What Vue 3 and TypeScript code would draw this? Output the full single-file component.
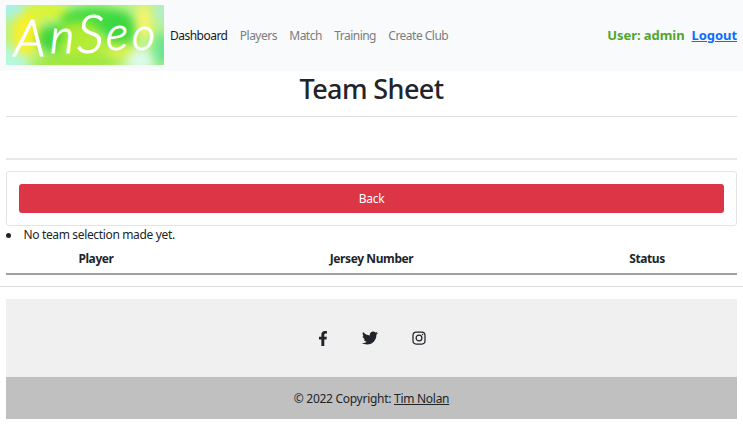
<script setup lang="ts">
interface NavItem {
  label: string
  active?: boolean
}

const navItems: NavItem[] = [
  { label: 'Dashboard', active: true },
  { label: 'Players' },
  { label: 'Match' },
  { label: 'Training' },
  { label: 'Create Club' },
]
const columns: string[] = ['Player', 'Jersey Number', 'Status']
</script>

<template>
  <div class="page">
    <nav class="navbar">
      <svg class="logo" width="158" height="60" viewBox="0 0 158 60" role="img" aria-label="AnSeo">
        <defs>
          <filter id="soft" x="-30%" y="-30%" width="160%" height="160%" color-interpolation-filters="sRGB">
            <feGaussianBlur stdDeviation="5" />
          </filter>
          <clipPath id="frame"><rect width="158" height="60" /></clipPath>
        </defs>
        <g clip-path="url(#frame)">
          <rect width="158" height="60" fill="#b8f389" />
          <g filter="url(#soft)">
            <rect x="-20" y="-20" width="198" height="100" fill="#b8f389" />
            <ellipse cx="1" cy="0" rx="18" ry="14" fill="#a9f2e4" />
            <ellipse cx="2" cy="57" rx="20" ry="15" fill="#b5f8dc" />
            <ellipse cx="20" cy="29" rx="14" ry="22" fill="#f8f02c" />
            <ellipse cx="40" cy="6" rx="22" ry="8" fill="#dcf433" />
            <ellipse cx="50" cy="34" rx="19" ry="14" fill="#43d63e" />
            <ellipse cx="88" cy="15" rx="34" ry="13" fill="#43dc42" />
            <ellipse cx="114" cy="25" rx="15" ry="19" fill="#3bd840" />
            <ellipse cx="73" cy="25" rx="19" ry="8" fill="#b0ea32" />
            <ellipse cx="80" cy="41" rx="29" ry="10" fill="#b4ed35" />
            <ellipse cx="70" cy="58" rx="43" ry="9" fill="#a0e83c" />
            <ellipse cx="138" cy="16" rx="9" ry="18" fill="#f3f46b" />
            <ellipse cx="117" cy="46" rx="16" ry="8" fill="#d8f14b" />
            <ellipse cx="134" cy="56" rx="13" ry="12" fill="#dcfaea" />
            <ellipse cx="157" cy="44" rx="10" ry="17" fill="#6ce592" />
            <ellipse cx="159" cy="6" rx="12" ry="13" fill="#afefc7" />
          </g>
        </g>
        <text class="logo-text" font-size="52" x="8" y="51">A</text>
        <text class="logo-text" font-size="47" x="44" y="48">n</text>
        <text class="logo-text" font-size="54" x="71" y="48">S</text>
        <text class="logo-text" font-size="47" x="100" y="45">e</text>
        <text class="logo-text" font-size="45" x="126" y="45">o</text>
      </svg>
      <ul class="nav-links">
        <li v-for="item in navItems" :key="item.label" :class="{ active: item.active }">{{ item.label }}</li>
      </ul>
      <div class="account"><span>User: admin</span><a class="logout">Logout</a></div>
    </nav>

    <main class="content">
      <h1>Team Sheet</h1>
      <hr class="rule first" />
      <hr class="rule second" />
      <div class="card"><button class="back" type="button">Back</button></div>
      <div class="notice"><span class="bullet"></span><span>No team selection made yet.</span></div>
      <div class="table-head">
        <div v-for="column in columns" :key="column"><span>{{ column }}</span></div>
      </div>
    </main>

    <hr class="rule wide" />

    <footer class="footer">
      <div class="social">
        <svg class="facebook" viewBox="0 0 320 512"><path d="M279 288l14-93h-89v-60c0-25 12-50 52-50h41V7s-37-7-72-7c-73 0-121 44-121 125v70H23v93h81v224h100V288z" /></svg>
        <svg class="twitter" viewBox="0 0 512 512"><path d="M459 152c0 4 1 9 1 13 0 139-106 299-299 299-59 0-115-17-161-47 8 1 16 1 25 1 49 0 95-17 131-45-47-1-85-32-98-73 6 1 13 2 20 2 9 0 19-1 27-4-48-9-84-52-84-103v-1c14 8 30 13 47 13-28-19-47-51-47-87 0-20 5-37 14-53 52 64 130 105 217 110-2-8-3-16-3-24 0-58 47-105 105-105 30 0 58 13 77 33 24-5 46-13 66-25-8 25-24 45-46 58 21-2 42-8 61-16-15 21-32 39-53 54z" /></svg>
        <svg class="instagram" viewBox="0 0 14 14"><rect x="1" y="1" width="12" height="12" rx="3.2" /><circle cx="7" cy="7" r="2.9" /><circle class="lens-dot" cx="10.5" cy="3.5" r=".75" /></svg>
      </div>
      <div class="copyright"><span>© 2022 Copyright: <a>Tim Nolan</a></span></div>
    </footer>
  </div>
</template>

<style>
body { margin: 0; background: #fff; }
</style>

<style scoped>
.page { box-sizing: border-box; width: 743px; height: 424px; overflow: hidden; color: #212529; font: 12px/18px "Noto Sans", "Open Sans", sans-serif; letter-spacing: -.31px; }
.navbar { display: flex; align-items: center; box-sizing: border-box; height: 71px; padding: 0 6px 1px; background: #f8fafc; }
.logo { flex: none; display: block; overflow: visible; }
.logo-text { fill: #fff; stroke: #fff; stroke-width: 1; font-family: Lato, sans-serif; font-style: italic; font-weight: 300; letter-spacing: 0; }
.nav-links { display: flex; gap: 12.4px; margin: 2px 0 0 6px; padding: 0; list-style: none; color: #7b7d7e; letter-spacing: -.52px; white-space: nowrap; }
.active { color: #17191b; }
.account { display: flex; gap: 7px; margin: 0 0 0 auto; color: #53a52d; font-size: 13px; font-weight: 700; letter-spacing: -.06px; white-space: nowrap; }
.logout { color: #0d6efd; text-decoration: underline; }
.content { margin: 0 6px; }
h1 { height: 36px; margin: 0; text-align: center; font-size: 27px; font-weight: 500; line-height: 36px; letter-spacing: -.6px; }
.rule { height: 1px; margin: 0; border: 0; background: #dcdddd; }
.first { margin-top: 9px; }
.second { margin-top: 41px; height: 2px; background: #e8e8e8; }
.card { box-sizing: border-box; height: 55px; margin-top: 11px; padding: 12px; border: 1px solid #e5e5e5; border-radius: 3px; }
.back { display: block; width: 100%; height: 29px; padding: 0; border: 0; border-radius: 3px; background: #dc3545; color: #fff; font: inherit; letter-spacing: inherit; }
.notice { display: flex; align-items: center; height: 18px; letter-spacing: -.35px; }
.bullet { width: 5px; height: 5px; margin-right: 12.5px; border-radius: 50%; background: #212529; }
.table-head { display: grid; grid-template-columns: 180px 371px 180px; box-sizing: border-box; height: 31px; padding-top: 6px; border-bottom: 2px solid #a0a1a2; text-align: center; font-weight: 700; letter-spacing: -.4px; }
.wide { margin-top: 11px; }
.footer { margin: 12px 6px 0; background: #f0f0f0; }
.social { display: flex; align-items: center; justify-content: center; height: 78px; }
.social svg { display: block; fill: #212529; }
.facebook { width: 10px; height: 15px; }
.twitter { width: 16px; height: 16px; margin: 0 34px; }
.instagram { width: 14px; height: 14px; }
.social .instagram { fill: none; stroke: #212529; stroke-width: 1.25; }
.social .lens-dot { fill: #212529; stroke: none; }
.copyright { display: flex; align-items: center; justify-content: center; box-sizing: border-box; height: 42px; padding-top: 2px; background: #c0c0c0; letter-spacing: -.28px; }
.copyright a { text-decoration: underline; }
</style>
